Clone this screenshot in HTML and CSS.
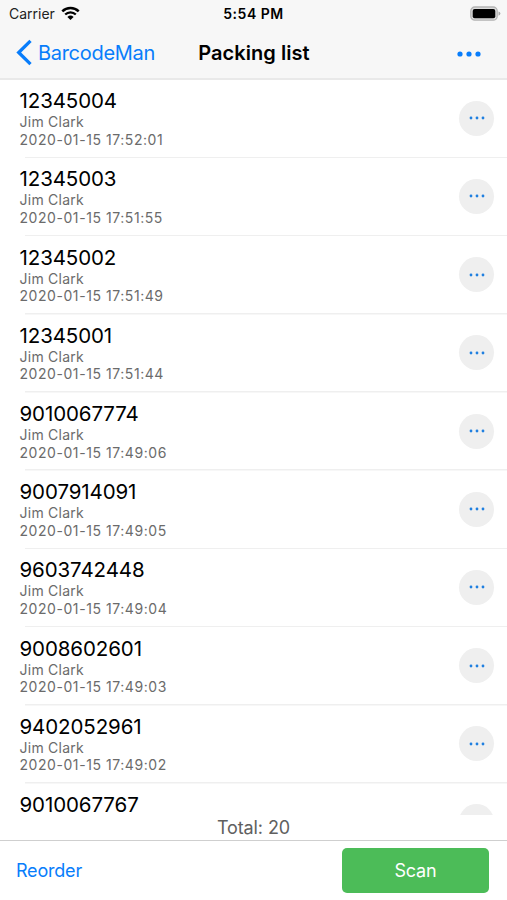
FILE: index.html
```
<!DOCTYPE html>
<html lang="en">
<head>
    <meta charset="UTF-8">
    <meta name="viewport" content="width=device-width, initial-scale=1.0">
    <title>Packing list</title>
    <link rel="stylesheet" href="styles.css">
</head>
<body>
    <header class="header">
        <div class="status-bar">
            <div class="carrier">
                <span>Carrier</span>
                <svg class="wifi" width="19" height="15" viewBox="0 0 19 15">
                    <path d="M1.3 5.3 C5.8 .8 13.2 .8 17.7 5.3" fill="none" stroke="#000" stroke-width="2.5"/>
                    <path d="M4.2 8.5 C7.2 5.6 11.8 5.6 14.8 8.5" fill="none" stroke="#000" stroke-width="2.3"/>
                    <path d="M6.4 10.9 Q9.5 8.2 12.6 10.9 L9.5 14 Z"/>
                </svg>
            </div>
            <div class="time">5:54 PM</div>
            <svg class="battery" width="31" height="16" viewBox="0 0 31 16">
                <rect x=".8" y="1" width="26.4" height="13.2" rx="4" fill="#dcdcdc" stroke="#b4b4b4" stroke-width="1.3"/>
                <rect x="2.7" y="2.9" width="22.6" height="9.4" rx="2" fill="#000"/>
                <path d="M28.5 5.4 Q30.4 6 30.4 7.6 T28.5 9.8 Z" fill="#a9a9a9"/>
            </svg>
        </div>
        <nav class="nav-bar">
            <a class="back">
                <svg width="16" height="27" viewBox="0 0 16 27">
                    <path d="M14.5 1.8 L2.7 13.5 L14.5 25.2" fill="none" stroke="#087dfb" stroke-width="3.3"/>
                </svg>
                <span>BarcodeMan</span>
            </a>
            <h1>Packing list</h1>
            <a class="menu">
                <svg width="24" height="6" viewBox="0 0 24 6" fill="#087dfb">
                    <circle cx="3" cy="3" r="2.6"/><circle cx="12" cy="3" r="2.6"/><circle cx="21" cy="3" r="2.6"/>
                </svg>
            </a>
        </nav>
    </header>

    <main class="list" id="list"></main>

    <div class="total">Total: 20</div>

    <footer class="footer">
        <a class="reorder">Reorder</a>
        <button class="scan">Scan</button>
    </footer>

    <script>
        const items = [
            ["12345004", "2020-01-15 17:52:01"],
            ["12345003", "2020-01-15 17:51:55"],
            ["12345002", "2020-01-15 17:51:49"],
            ["12345001", "2020-01-15 17:51:44"],
            ["9010067774", "2020-01-15 17:49:06"],
            ["9007914091", "2020-01-15 17:49:05"],
            ["9603742448", "2020-01-15 17:49:04"],
            ["9008602601", "2020-01-15 17:49:03"],
            ["9402052961", "2020-01-15 17:49:02"],
            ["9010067767", ""]
        ];

        document.getElementById("list").innerHTML = items.map(([code, date]) => `
            <div class="row">
                <div class="info">
                    <div class="code">${code}</div>
                    ${date ? `<div class="meta">Jim Clark</div><div class="meta date">${date}</div>` : ""}
                </div>
                <div class="more">
                    <svg width="16" height="4" viewBox="0 0 16 4" fill="#1f7fe0">
                        <circle cx="2" cy="2" r="1.4"/><circle cx="8" cy="2" r="1.4"/><circle cx="14" cy="2" r="1.4"/>
                    </svg>
                </div>
            </div>
        `).join("");
    </script>
</body>
</html>
```
FILE: styles.css
```
* {
    box-sizing: border-box;
}

body {
    font-family: Inter, 'Liberation Sans', sans-serif;
    margin: 0;
    height: 900px;
    display: flex;
    flex-direction: column;
    overflow: hidden;
    background: #fff;
    color: #000;
}

.header {
    height: 80px;
    flex: none;
    background: #f7f7f7;
    border-bottom: 2px solid #e9e9e9;
}

.status-bar {
    height: 27px;
    display: grid;
    grid-template-columns: 1fr auto 1fr;
    align-items: center;
    padding: 0 6px;
}

.carrier {
    display: flex;
    align-items: center;
    gap: 6px;
    padding-left: 3px;
    font-size: 14px;
    color: #222;
}

.time {
    font-size: 14px;
    font-weight: 600;
    letter-spacing: 0.5px;
}

.battery {
    justify-self: end;
}

.nav-bar {
    height: 51px;
    display: grid;
    grid-template-columns: 1fr auto 1fr;
    align-items: center;
    padding: 0 15px 0 16px;
}

.back {
    display: flex;
    align-items: center;
    gap: 6px;
    font-size: 20px;
    letter-spacing: -0.3px;
    color: #087dfb;
}

.nav-bar h1 {
    margin: 0;
    font-size: 20px;
    font-weight: 600;
    letter-spacing: 0.05px;
}

.menu {
    justify-self: end;
    display: flex;
    padding-right: 11px;
    padding-top: 2px;
}

.list {
    height: 735px;
    flex: none;
    overflow: hidden;
}

.row {
    height: 78.2px;
    display: flex;
    justify-content: space-between;
    padding: 10.3px 13px 0 19.5px;
    background: linear-gradient(#efefef, #efefef) 25px 100% / 100% 1.5px no-repeat;
}

.code {
    font-size: 20.5px;
    line-height: 21px;
    letter-spacing: -0.1px;
    margin-bottom: 2px;
}

.meta {
    font-size: 14px;
    line-height: 17.6px;
    letter-spacing: 0.25px;
    color: #6b6b6b;
}

.date {
    letter-spacing: 0.56px;
}

.more {
    width: 35px;
    height: 35px;
    margin-top: 10.5px;
    border-radius: 50%;
    background: #efefef;
    display: flex;
    align-items: center;
    justify-content: center;
}

.total {
    height: 25px;
    flex: none;
    font-size: 18px;
    line-height: 26px;
    letter-spacing: -0.1px;
    text-align: center;
    color: #606060;
}

.footer {
    flex: 1;
    display: flex;
    align-items: center;
    justify-content: space-between;
    padding: 0 18px 0 16px;
    border-top: 1px solid #cfcfcf;
}

.reorder {
    font-size: 18px;
    letter-spacing: -0.2px;
    color: #087dfb;
}

.scan {
    width: 147px;
    height: 45px;
    border: none;
    border-radius: 5px;
    background: #4cbc58;
    color: #fff;
    font-family: inherit;
    font-size: 18px;
    letter-spacing: -0.2px;
}
```
